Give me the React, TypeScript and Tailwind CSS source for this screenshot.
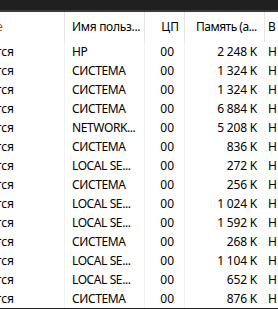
const rows = [
  { user: "HP", cpu: "00", mem: "2 248 K" },
  { user: "СИСТЕМА", cpu: "00", mem: "1 324 K" },
  { user: "СИСТЕМА", cpu: "00", mem: "1 324 K" },
  { user: "СИСТЕМА", cpu: "00", mem: "6 884 K" },
  { user: "NETWORK...", cpu: "00", mem: "5 208 K" },
  { user: "СИСТЕМА", cpu: "00", mem: "836 K" },
  { user: "LOCAL SE...", cpu: "00", mem: "272 K" },
  { user: "СИСТЕМА", cpu: "00", mem: "256 K" },
  { user: "LOCAL SE...", cpu: "00", mem: "1 024 K" },
  { user: "LOCAL SE...", cpu: "00", mem: "1 592 K" },
  { user: "СИСТЕМА", cpu: "00", mem: "268 K" },
  { user: "LOCAL SE...", cpu: "00", mem: "1 104 K" },
  { user: "LOCAL SE...", cpu: "00", mem: "652 K" },
  { user: "СИСТЕМА", cpu: "00", mem: "876 K" },
];

export default function App() {
  return (
    <div
      className="w-[278px] h-[309px] bg-white overflow-hidden flex flex-col text-[12px] text-black"
      style={{ fontFamily: '"Segoe UI", "Noto Sans", "Liberation Sans", sans-serif' }}
    >
      <div className="h-[10px] bg-[#202020] shrink-0" />
      <div className="h-[2px] bg-[#3a3a3a] shrink-0" />

      {/* header */}
      <div className="grid grid-cols-[65px_80px_40px_80px_13px] h-[30px] shrink-0 items-stretch whitespace-nowrap">
        <div className="flex items-center justify-end overflow-hidden border-r border-[#e5e5e5] pr-[61px]">
          <span className="text-[#b05a00]">Состояние</span>
        </div>
        <div className="flex items-center pl-[7px] border-r border-[#e5e5e5] overflow-hidden tracking-[-0.3px]">Имя польз...</div>
        <div className="flex items-center justify-end pr-[5px] border-r border-[#e5e5e5]">ЦП</div>
        <div className="flex items-center pl-[11px] border-r border-[#e5e5e5] overflow-hidden tracking-[-0.5px]">Память (а...</div>
        <div className="flex items-center pl-[3px] overflow-hidden">В</div>
      </div>

      {/* rows */}
      <div className="flex flex-col">
        {rows.map((r, i) => (
          <div key={i} className="grid grid-cols-[65px_80px_40px_80px_13px] h-[19px] items-stretch whitespace-nowrap">
            <div className="flex items-center justify-end overflow-hidden border-r border-[#eef1f6] pr-[50px]">
              <span>Выполняется</span>
            </div>
            <div className="flex items-center pl-[7px] border-r border-[#eef1f6] overflow-hidden tracking-[-0.4px]">{r.user}</div>
            <div className="flex items-center justify-end pr-[10px] border-r border-[#eef1f6]">{r.cpu}</div>
            <div className="flex items-center justify-end pr-[8px] overflow-hidden tracking-[-0.2px]">{r.mem}</div>
            <div className="flex items-center pl-[3px] overflow-hidden">Н</div>
          </div>
        ))}
      </div>
      <div className="flex-1" />
      <div className="h-[4px] bg-[#202020] shrink-0" />
    </div>
  );
}
